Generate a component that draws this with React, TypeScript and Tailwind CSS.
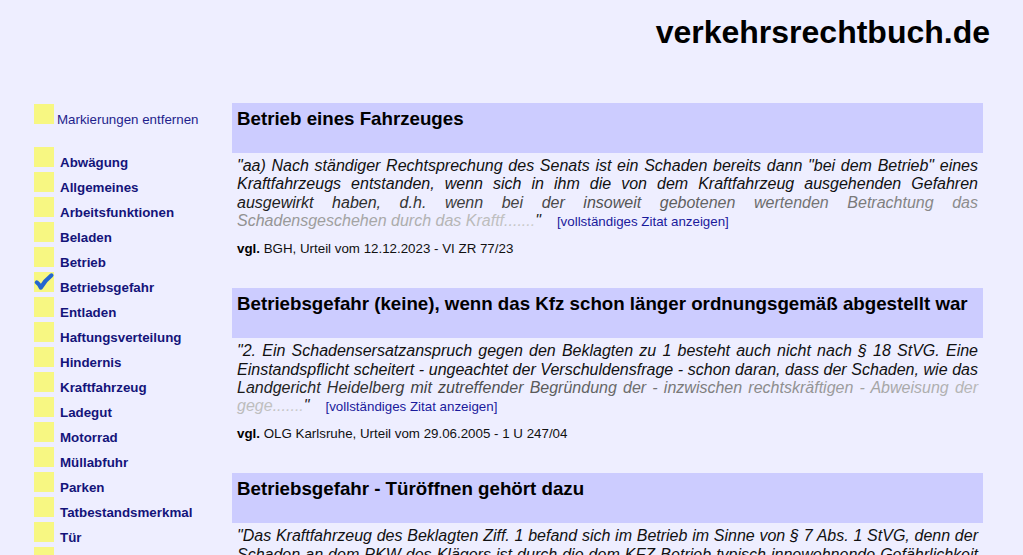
import React from "react";

function fade(text: string, from = 0x1a, to = 0xcc) {
  const chars = Array.from(text);
  const n = chars.length;
  return chars.map((c, i) => {
    const v = Math.round(from + ((to - from) * i) / Math.max(1, n - 1));
    return (
      <span key={i} style={{ color: `rgb(${v},${v},${v})` }}>
        {c}
      </span>
    );
  });
}

const items = [
  "Abwägung",
  "Allgemeines",
  "Arbeitsfunktionen",
  "Beladen",
  "Betrieb",
  "Betriebsgefahr",
  "Entladen",
  "Haftungsverteilung",
  "Hindernis",
  "Kraftfahrzeug",
  "Ladegut",
  "Motorrad",
  "Müllabfuhr",
  "Parken",
  "Tatbestandsmerkmal",
  "Tür",
  "Unfall",
  "Zurechnung",
];

function Square({ checked }: { checked?: boolean }) {
  return (
    <div className="relative w-5 h-5 shrink-0 bg-[#f7f782]">
      {checked && (
        <svg
          className="absolute left-0 top-0 overflow-visible"
          width="20"
          height="20"
          viewBox="0 0 20 20"
        >
          <path
            d="M2.8 10.4 C4.4 11.6 5.8 13.4 6.8 15.6 C9.6 10.8 13 6.8 17.4 3.4"
            fill="none"
            stroke="#2466cf"
            strokeWidth="4.2"
            strokeLinecap="round"
            strokeLinejoin="round"
          />
        </svg>
      )}
    </div>
  );
}

type Entry = {
  title: string;
  solid: string;
  faded: string;
  cite: string;
};

const entries: Entry[] = [
  {
    title: "Betrieb eines Fahrzeuges",
    solid:
      '"aa) Nach ständiger Rechtsprechung des Senats ist ein Schaden bereits dann "bei dem Betrieb" eines Kraftfahrzeugs entstanden, wenn sich in ihm die von dem Kraftfahrzeug ausgehenden Gefahren ',
    faded:
      "ausgewirkt haben, d.h. wenn bei der insoweit gebotenen wertenden Betrachtung das Schadensgeschehen durch das Kraftf.......",
    cite: "BGH, Urteil vom 12.12.2023 - VI ZR 77/23",
  },
  {
    title:
      "Betriebsgefahr (keine), wenn das Kfz schon länger ordnungsgemäß abgestellt war",
    solid:
      '"2. Ein Schadensersatzanspruch gegen den Beklagten zu 1 besteht auch nicht nach § 18 StVG. Eine Einstandspflicht scheitert - ungeachtet der Verschuldensfrage - schon daran, dass der Schaden, wie das ',
    faded:
      "Landgericht Heidelberg mit zutreffender Begründung der - inzwischen rechtskräftigen - Abweisung der gege.......",
    cite: "OLG Karlsruhe, Urteil vom 29.06.2005 - 1 U 247/04",
  },
  {
    title: "Betriebsgefahr - Türöffnen gehört dazu",
    solid:
      '"Das Kraftfahrzeug des Beklagten Ziff. 1 befand sich im Betrieb im Sinne von § 7 Abs. 1 StVG, denn der Schaden an dem PKW des Klägers ist durch die dem KFZ-Betrieb typisch innewohnende Gefährlichkeit ',
    faded:
      "verursacht worden, nämlich durch das Öffnen der Fahrertür beim Aussteigen des Fah.......",
    cite: "AG Freiburg, Urteil vom 01.01.2000 - 1 C 1/00",
  },
];

export default function App() {
  return (
    <div className="min-h-screen bg-[#eeeeff] font-['Liberation_Sans',Arial,sans-serif] text-black">
      <header className="pt-[14px] pr-[33px] text-right">
        <h1 className="text-[32px] font-bold leading-[37px]">verkehrsrechtbuch.de</h1>
      </header>
      <div className="flex pt-[52px] pl-[34px]">
        <aside className="w-[198px] shrink-0">
          <div className="mt-[1px] flex items-baseline h-5 gap-[3px]">
            <Square />
            <span className="text-[13.33px] leading-[15px] text-[#1e1e8c]">
              Markierungen entfernen
            </span>
          </div>
          <div className="mt-[23px] flex flex-col gap-[5px]">
            {items.map((it) => (
              <div key={it} className="flex items-baseline h-5 gap-[6px]">
                <Square checked={it === "Betriebsgefahr"} />
                <span className="text-[13.33px] leading-[15px] font-bold text-[#14147a]">
                  {it}
                </span>
              </div>
            ))}
          </div>
        </aside>
        <main className="w-[751px] shrink-0">
          {entries.map((e) => (
            <section key={e.title} className="mb-[32.5px]">
              <div className="h-[50px] bg-[#ccccff] px-[5px] pt-[5px]">
                <h3 className="text-[18.72px] font-bold leading-[22px]">{e.title}</h3>
              </div>
              <p className="mt-[4px] px-[5px] italic text-[16px] leading-[18.4px] text-justify text-[#111]">
                {e.solid}
                {fade(e.faded)}
                <span className="text-[#222]">"</span>
                <a className="not-italic ml-[16px] text-[13.33px] text-[#1a1a9c] cursor-pointer">
                  [vollständiges Zitat anzeigen]
                </a>
              </p>
              <p className="mt-[9px] px-[5px] text-[13.33px] leading-[15px] text-[#111]">
                <b className="text-black">vgl.</b> {e.cite}
              </p>
            </section>
          ))}
        </main>
      </div>
    </div>
  );
}
